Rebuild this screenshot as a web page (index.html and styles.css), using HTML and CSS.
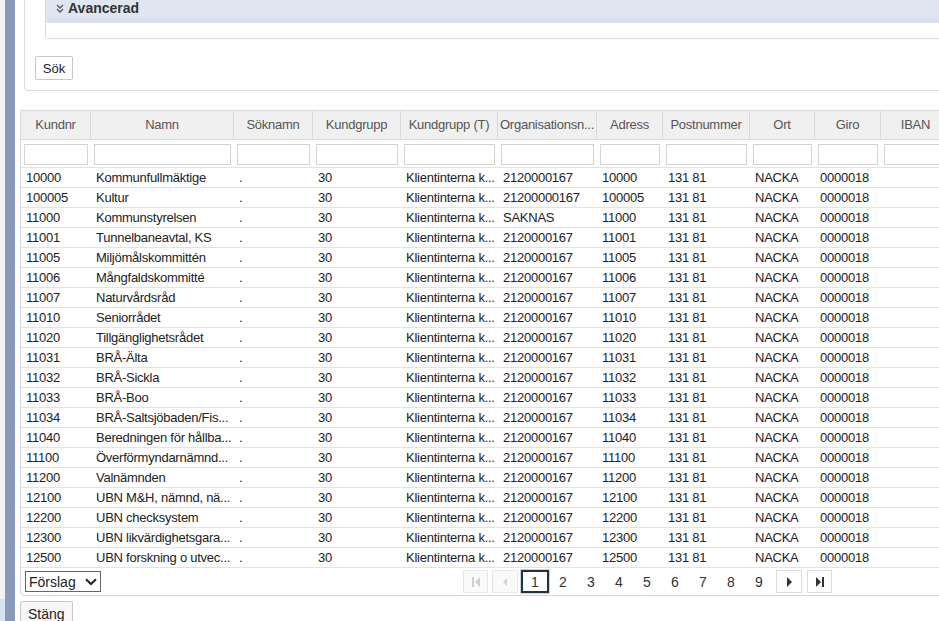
FILE: index.html
```html
<!DOCTYPE html>
<html lang="sv">
<head>
<meta charset="utf-8">
<title>Kundsök</title>
<link rel="stylesheet" href="styles.css">
</head>
<body>
<div class="edge">
  <div class="edge-spacer"></div>
  <div class="edge-foot"></div>
</div>
<div class="rail"></div>
<main class="main">
  <section class="search-panel">
    <div class="adv">
      <div class="adv-head">
        <svg class="adv-icon" width="8" height="9" viewBox="0 0 8 9"><path d="M1 1 L4 4 L7 1 M1 5 L4 8 L7 5" fill="none" stroke="#555" stroke-width="1.3"/></svg>
        <span>Avancerad</span>
      </div>
      <div class="adv-body"></div>
    </div>
    <button class="btn btn-sok" type="button">Sök</button>
  </section>

  <section class="grid">
    <div class="row head">
      <div class="cell">Kundnr</div>
      <div class="cell">Namn</div>
      <div class="cell">Söknamn</div>
      <div class="cell">Kundgrupp</div>
      <div class="cell">Kundgrupp (T)</div>
      <div class="cell">Organisationsn...</div>
      <div class="cell">Adress</div>
      <div class="cell">Postnummer</div>
      <div class="cell">Ort</div>
      <div class="cell">Giro</div>
      <div class="cell">IBAN</div>
    </div>
    <div class="row filter">
      <div class="cell"><input type="text"></div>
      <div class="cell"><input type="text"></div>
      <div class="cell"><input type="text"></div>
      <div class="cell"><input type="text"></div>
      <div class="cell"><input type="text"></div>
      <div class="cell"><input type="text"></div>
      <div class="cell"><input type="text"></div>
      <div class="cell"><input type="text"></div>
      <div class="cell"><input type="text"></div>
      <div class="cell"><input type="text"></div>
      <div class="cell"><input type="text"></div>
    </div>

    <div class="row data"><div class="cell">10000</div><div class="cell">Kommunfullmäktige</div><div class="cell">.</div><div class="cell">30</div><div class="cell">Klientinterna k...</div><div class="cell">2120000167</div><div class="cell">10000</div><div class="cell">131 81</div><div class="cell">NACKA</div><div class="cell">0000018</div><div class="cell"></div></div>
    <div class="row data"><div class="cell">100005</div><div class="cell">Kultur</div><div class="cell">.</div><div class="cell">30</div><div class="cell">Klientinterna k...</div><div class="cell">21200000167</div><div class="cell">100005</div><div class="cell">131 81</div><div class="cell">NACKA</div><div class="cell">0000018</div><div class="cell"></div></div>
    <div class="row data"><div class="cell">11000</div><div class="cell">Kommunstyrelsen</div><div class="cell">.</div><div class="cell">30</div><div class="cell">Klientinterna k...</div><div class="cell">SAKNAS</div><div class="cell">11000</div><div class="cell">131 81</div><div class="cell">NACKA</div><div class="cell">0000018</div><div class="cell"></div></div>
    <div class="row data"><div class="cell">11001</div><div class="cell">Tunnelbaneavtal, KS</div><div class="cell">.</div><div class="cell">30</div><div class="cell">Klientinterna k...</div><div class="cell">2120000167</div><div class="cell">11001</div><div class="cell">131 81</div><div class="cell">NACKA</div><div class="cell">0000018</div><div class="cell"></div></div>
    <div class="row data"><div class="cell">11005</div><div class="cell">Miljömålskommittén</div><div class="cell">.</div><div class="cell">30</div><div class="cell">Klientinterna k...</div><div class="cell">2120000167</div><div class="cell">11005</div><div class="cell">131 81</div><div class="cell">NACKA</div><div class="cell">0000018</div><div class="cell"></div></div>
    <div class="row data"><div class="cell">11006</div><div class="cell">Mångfaldskommitté</div><div class="cell">.</div><div class="cell">30</div><div class="cell">Klientinterna k...</div><div class="cell">2120000167</div><div class="cell">11006</div><div class="cell">131 81</div><div class="cell">NACKA</div><div class="cell">0000018</div><div class="cell"></div></div>
    <div class="row data"><div class="cell">11007</div><div class="cell">Naturvårdsråd</div><div class="cell">.</div><div class="cell">30</div><div class="cell">Klientinterna k...</div><div class="cell">2120000167</div><div class="cell">11007</div><div class="cell">131 81</div><div class="cell">NACKA</div><div class="cell">0000018</div><div class="cell"></div></div>
    <div class="row data"><div class="cell">11010</div><div class="cell">Seniorrådet</div><div class="cell">.</div><div class="cell">30</div><div class="cell">Klientinterna k...</div><div class="cell">2120000167</div><div class="cell">11010</div><div class="cell">131 81</div><div class="cell">NACKA</div><div class="cell">0000018</div><div class="cell"></div></div>
    <div class="row data"><div class="cell">11020</div><div class="cell">Tillgänglighetsrådet</div><div class="cell">.</div><div class="cell">30</div><div class="cell">Klientinterna k...</div><div class="cell">2120000167</div><div class="cell">11020</div><div class="cell">131 81</div><div class="cell">NACKA</div><div class="cell">0000018</div><div class="cell"></div></div>
    <div class="row data"><div class="cell">11031</div><div class="cell">BRÅ-Älta</div><div class="cell">.</div><div class="cell">30</div><div class="cell">Klientinterna k...</div><div class="cell">2120000167</div><div class="cell">11031</div><div class="cell">131 81</div><div class="cell">NACKA</div><div class="cell">0000018</div><div class="cell"></div></div>
    <div class="row data"><div class="cell">11032</div><div class="cell">BRÅ-Sickla</div><div class="cell">.</div><div class="cell">30</div><div class="cell">Klientinterna k...</div><div class="cell">2120000167</div><div class="cell">11032</div><div class="cell">131 81</div><div class="cell">NACKA</div><div class="cell">0000018</div><div class="cell"></div></div>
    <div class="row data"><div class="cell">11033</div><div class="cell">BRÅ-Boo</div><div class="cell">.</div><div class="cell">30</div><div class="cell">Klientinterna k...</div><div class="cell">2120000167</div><div class="cell">11033</div><div class="cell">131 81</div><div class="cell">NACKA</div><div class="cell">0000018</div><div class="cell"></div></div>
    <div class="row data"><div class="cell">11034</div><div class="cell">BRÅ-Saltsjöbaden/Fis...</div><div class="cell">.</div><div class="cell">30</div><div class="cell">Klientinterna k...</div><div class="cell">2120000167</div><div class="cell">11034</div><div class="cell">131 81</div><div class="cell">NACKA</div><div class="cell">0000018</div><div class="cell"></div></div>
    <div class="row data"><div class="cell">11040</div><div class="cell">Beredningen för hållba...</div><div class="cell">.</div><div class="cell">30</div><div class="cell">Klientinterna k...</div><div class="cell">2120000167</div><div class="cell">11040</div><div class="cell">131 81</div><div class="cell">NACKA</div><div class="cell">0000018</div><div class="cell"></div></div>
    <div class="row data"><div class="cell">11100</div><div class="cell">Överförmyndarnämnd...</div><div class="cell">.</div><div class="cell">30</div><div class="cell">Klientinterna k...</div><div class="cell">2120000167</div><div class="cell">11100</div><div class="cell">131 81</div><div class="cell">NACKA</div><div class="cell">0000018</div><div class="cell"></div></div>
    <div class="row data"><div class="cell">11200</div><div class="cell">Valnämnden</div><div class="cell">.</div><div class="cell">30</div><div class="cell">Klientinterna k...</div><div class="cell">2120000167</div><div class="cell">11200</div><div class="cell">131 81</div><div class="cell">NACKA</div><div class="cell">0000018</div><div class="cell"></div></div>
    <div class="row data"><div class="cell">12100</div><div class="cell">UBN M&amp;H, nämnd, nä...</div><div class="cell">.</div><div class="cell">30</div><div class="cell">Klientinterna k...</div><div class="cell">2120000167</div><div class="cell">12100</div><div class="cell">131 81</div><div class="cell">NACKA</div><div class="cell">0000018</div><div class="cell"></div></div>
    <div class="row data"><div class="cell">12200</div><div class="cell">UBN checksystem</div><div class="cell">.</div><div class="cell">30</div><div class="cell">Klientinterna k...</div><div class="cell">2120000167</div><div class="cell">12200</div><div class="cell">131 81</div><div class="cell">NACKA</div><div class="cell">0000018</div><div class="cell"></div></div>
    <div class="row data"><div class="cell">12300</div><div class="cell">UBN likvärdighetsgara...</div><div class="cell">.</div><div class="cell">30</div><div class="cell">Klientinterna k...</div><div class="cell">2120000167</div><div class="cell">12300</div><div class="cell">131 81</div><div class="cell">NACKA</div><div class="cell">0000018</div><div class="cell"></div></div>
    <div class="row data"><div class="cell">12500</div><div class="cell">UBN forskning o utvec...</div><div class="cell">.</div><div class="cell">30</div><div class="cell">Klientinterna k...</div><div class="cell">2120000167</div><div class="cell">12500</div><div class="cell">131 81</div><div class="cell">NACKA</div><div class="cell">0000018</div><div class="cell"></div></div>

    <div class="pager">
      <div class="select">
        <span>Förslag</span>
        <svg width="12" height="8" viewBox="0 0 12 8"><path d="M1 1.2 L6 6 L11 1.2" fill="none" stroke="#222" stroke-width="2"/></svg>
      </div>
      <nav class="pages">
        <span class="pbtn pbtn-first disabled"><svg width="10" height="12" viewBox="0 0 10 12"><rect x="1" y="1" width="2" height="10" fill="#cfcfcf"/><path d="M9 1 L4 6 L9 11 Z" fill="#cfcfcf"/></svg></span>
        <span class="pbtn pbtn-prev disabled"><svg width="6" height="10" viewBox="0 0 6 10"><path d="M5 1 L1 5 L5 9 Z" fill="#d4d4d4"/></svg></span>
        <span class="pnum current">1</span>
        <span class="pnum">2</span>
        <span class="pnum">3</span>
        <span class="pnum">4</span>
        <span class="pnum">5</span>
        <span class="pnum">6</span>
        <span class="pnum">7</span>
        <span class="pnum">8</span>
        <span class="pnum">9</span>
        <span class="pbtn pbtn-next"><svg width="7" height="12" viewBox="0 0 7 12"><path d="M1 1 L6 6 L1 11 Z" fill="#333"/></svg></span>
        <span class="pbtn pbtn-last"><svg width="10" height="12" viewBox="0 0 10 12"><path d="M1 1 L6 6 L1 11 Z" fill="#333"/><rect x="7" y="1" width="2" height="10" fill="#333"/></svg></span>
      </nav>
    </div>
  </section>

  <button class="btn btn-close" type="button">Stäng</button>
</main>
</body>
</html>
```

FILE: styles.css
```css
* {
  box-sizing: border-box;
}

html,
body {
  margin: 0;
  padding: 0;
}

body {
  display: flex;
  width: 939px;
  height: 621px;
  overflow: hidden;
  background: #fff;
  color: #222;
  font-family: "Liberation Sans", Arial, sans-serif;
  font-size: 13px;
}

.edge {
  flex: none;
  width: 5px;
  display: flex;
  flex-direction: column;
  background: #f3f4f6;
}

.edge-spacer {
  flex: 1;
}

.edge-foot {
  height: 22px;
  background: #d6e2f0;
}

.rail {
  flex: none;
  width: 10px;
  background: #8a9bb9;
}

.main {
  flex: 1;
  min-width: 0;
  overflow: hidden;
}

/* search panel */
.search-panel {
  width: 960px;
  margin-left: 9px;
  padding: 0 0 10px 10px;
  border: 1px solid #dcdcdc;
  border-top: 0;
  border-radius: 0 0 0 4px;
}

.adv {
  margin-left: 10px;
  border-left: 1px solid #dcdcdc;
  border-bottom: 1px solid #dcdcdc;
  border-radius: 0 0 0 4px;
}

.adv-head {
  height: 23px;
  display: flex;
  align-items: flex-start;
  gap: 4px;
  padding: 1px 0 0 10px;
  background: linear-gradient(#dfe6f1 72%, #d8dfeb);
  color: #333;
  font-size: 14px;
  font-weight: bold;
  line-height: 14px;
}

.adv-icon {
  margin-top: 3px;
  flex: none;
}

.adv-body {
  height: 15px;
  background: #fffffd;
}

.btn {
  display: block;
  margin: 0;
  font-family: "Liberation Sans", Arial, sans-serif;
  color: #222;
  cursor: pointer;
}

.btn-sok {
  margin-top: 17px;
  width: 38px;
  height: 24px;
  padding: 0;
  border: 1px solid #c6c6c6;
  border-radius: 2px;
  background: #fff;
  font-size: 13px;
}

/* grid */
.grid {
  width: 1000px;
  margin: 19px 0 0 5px;
  border: 1px solid #d5d5d5;
  border-radius: 0 0 0 4px;
}

.row {
  display: grid;
  grid-template-columns: 70px 143px 79px 88px 97px 99px 66px 87px 65px 66px 70px;
  letter-spacing: -0.25px;
}

.cell {
  min-width: 0;
  overflow: hidden;
  white-space: nowrap;
  text-overflow: ellipsis;
}

.head {
  height: 29px;
  background: #f0f0f0;
  border-bottom: 1px solid #dadada;
}

.head .cell {
  padding: 0 1px;
  border-right: 1px solid #dadada;
  color: #555;
  line-height: 28px;
  text-align: center;
}

.filter {
  height: 28px;
  border-bottom: 1px solid #e2e2e2;
}

.filter .cell {
  padding: 4px 3px 0 3px;
}

.filter input {
  display: block;
  width: 100%;
  height: 21px;
  margin: 0;
  padding: 0 3px;
  border: 1px solid #d3d3d3;
  background: #fff;
  font: inherit;
}

.data {
  height: 20px;
  border-bottom: 1px solid #e3e3e3;
}

.data .cell {
  padding: 0 1px 0 5px;
  line-height: 19px;
}

/* pager */
.pager {
  height: 27px;
  display: flex;
  align-items: flex-start;
  padding-left: 4px;
}

.select {
  margin-top: 3px;
  width: 76px;
  height: 21px;
  display: flex;
  align-items: center;
  justify-content: space-between;
  padding: 0 3px 0 3px;
  border: 1px solid #666;
  background: #fff;
  font-size: 14px;
  color: #222;
}

.pages {
  display: flex;
  align-items: flex-start;
  margin-left: 362px;
  margin-top: 2px;
}

.pbtn {
  height: 23px;
  display: flex;
  align-items: center;
  justify-content: center;
  border: 1px solid #dcdcdc;
  background: #fff;
}

.pbtn.disabled {
  border-color: #e8e8e8;
  background: #fafafa;
}

.pbtn-first {
  width: 25px;
  margin-right: 4px;
}

.pbtn-prev {
  width: 26px;
  margin-right: 3px;
}

.pbtn-next {
  width: 26px;
  margin-left: 3px;
}

.pbtn-last {
  width: 25px;
  margin-left: 5px;
}

.pnum {
  width: 28px;
  height: 23px;
  display: flex;
  align-items: center;
  justify-content: center;
  font-size: 14px;
  color: #333;
}

.pnum.current {
  border: 2px solid #24343d;
  box-shadow: 0 0 0 1px #bfd9e6;
}

.btn-close {
  margin: 5px 0 0 5px;
  height: 26px;
  padding: 0 7px;
  border: 1px solid #c9c9c9;
  border-radius: 2px;
  background: #f7f7f7;
  font-size: 14px;
}
```
